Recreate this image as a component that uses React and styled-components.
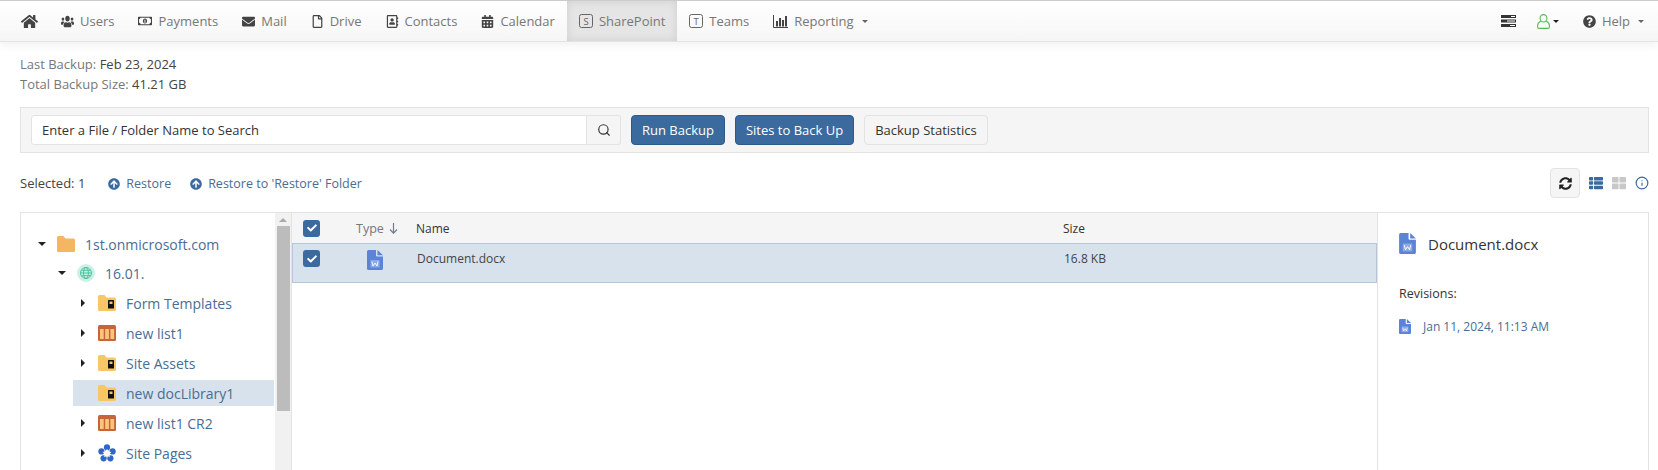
import React from "react";
import styled, { createGlobalStyle } from "styled-components";
import { FaHome, FaUsers, FaRegMoneyBillAlt, FaEnvelope, FaRegFile, FaCalendarAlt, FaQuestionCircle, FaArrowCircleUp, FaSyncAlt, FaThList, FaThLarge, FaCheck, FaRegAddressBook } from "react-icons/fa";
import { FiInfo, FiSearch } from "react-icons/fi";

const Global = createGlobalStyle`
  html, body { margin: 0; padding: 0; height: 470px; overflow: hidden; background: #fff; }
  body { font-family: "Open Sans", "Liberation Sans", sans-serif; font-size: 13px; color: #333; }
  * { box-sizing: border-box; }
`;
const Page = styled.div`height: 470px; display: flex; flex-direction: column; overflow: hidden;`;
const Nav = styled.nav`
  height: 42px; flex: none; display: flex; align-items: stretch; justify-content: space-between;
  padding-left: 9px; padding-right: 2px;
  border-top: 1px solid #ccc; border-bottom: 1px solid #e3e3e3;
  background: linear-gradient(#fff, #f6f6f6); box-shadow: 0 4px 8px rgba(0,0,0,.05);
`;
const NavGroup = styled.div`display: flex; align-items: stretch;`;
const NavItem = styled.div`
  display: flex; align-items: center; gap: ${p => p.$gap ?? 6}px; color: #777; font-size: 13px; white-space: nowrap;
  padding: 0 ${p => p.$right ?? 12}px 0 ${p => p.$left ?? 12}px;
  svg { color: #444; flex: none; }
  ${p => p.$active && `background: #e5e5e5; box-shadow: inset 0 0 8px rgba(0,0,0,.1);`}
`;
const LightIcon = styled.span`display: inline-flex; svg { color: #666; }`;
const Caret = styled.span`
  width: 0; height: 0; margin-left: 2px; border-left: 3px solid transparent; border-right: 3px solid transparent;
  border-top: 3px solid ${p => p.$dark ? "#222" : "#666"};
`;
const Content = styled.div`flex: 1; min-height: 0; display: flex; flex-direction: column; padding: 0 9px 0 20px;`;
const Info = styled.div`padding-top: 12px; line-height: 20px; color: #777; font-size: 13px; height: 65px; span { color: #444; }`;
const Toolbar = styled.div`
  height: 46px; flex: none; display: flex; align-items: center; gap: 10px; padding: 0 10px;
  background: #f5f5f5; border: 1px solid #e3e3e3;
`;
const SearchGroup = styled.div`display: flex; width: 590px; height: 30px;`;
const SearchInput = styled.div`
  flex: 1; display: flex; align-items: center; padding: 0 10px; background: #fff; color: #333; font-size: 13px;
  border: 1px solid #e3e3e3; border-radius: 3px 0 0 3px;
`;
const SearchBtn = styled.div`
  width: 34px; display: flex; align-items: center; justify-content: center; color: #333;
  background: #f5f5f5; border: 1px solid #e3e3e3; border-left: 0; border-radius: 0 3px 3px 0;
`;
const Btn = styled.div`
  height: 30px; display: flex; align-items: center; padding: 0 10px; font-size: 13px; border-radius: 4px;
  background: ${p => p.$primary ? "#3a6a9e" : "#f5f5f5"}; color: ${p => p.$primary ? "#fff" : "#333"};
  border: 1px solid ${p => p.$primary ? "#2e5a88" : "#e3e3e3"};
`;
const ActionBar = styled.div`height: 59px; flex: none; display: flex; align-items: center; padding-top: 1px;`;
const Selected = styled.div`color: #444; font-size: 13px; margin-right: 23px;`;
const RestoreLink = styled.div`
  display: flex; align-items: center; gap: 6px; color: #4a6d94; font-size: 12.5px; margin-right: 19px; padding-top: 1px;
`;
const ViewTools = styled.div`margin-left: auto; display: flex; align-items: center; gap: 9px; color: #3a6a9e;`;
const RefreshBtn = styled.div`
  width: 30px; height: 30px; display: flex; align-items: center; justify-content: center; color: #222;
  background: #f5f5f5; border: 1px solid #e3e3e3; border-radius: 4px;
`;
const Panels = styled.div`flex: 1; min-height: 0; display: flex; border-top: 1px solid #e3e3e3; border-left: 1px solid #e3e3e3; border-right: 1px solid #e3e3e3;`;
const TreePane = styled.div`width: 271px; flex: none; display: flex; border-right: 1px solid #e3e3e3;`;
const Tree = styled.div`flex: 1; padding-top: 18px;`;
const Row = styled.div`
  height: 26px; margin-bottom: ${p => p.$tight ? 3 : 4}px; margin-left: ${p => p.$indent}px; display: flex; align-items: center;
  color: #4a6d94; font-size: 14px; white-space: nowrap; padding-left: ${p => p.$pad}px;
  ${p => p.$active && `background: #d8e2ec;`}
`;
const Arrow = styled.span`
  width: 0; height: 0; flex: none;
  ${p => p.$open
    ? `border-left: 4px solid transparent; border-right: 4px solid transparent; border-top: 4px solid #222; margin-right: 11px;`
    : `border-top: 4px solid transparent; border-bottom: 4px solid transparent; border-left: 4px solid #222; margin-right: 13px;`}
`;
const RowIcon = styled.span`display: inline-flex; flex: none; margin-right: 10px;`;
const Scroll = styled.div`width: 16px; flex: none; background: #f1f1f1; display: flex; flex-direction: column; align-items: center; margin-left: 1px;`;
const ScrollUp = styled.div`
  margin-top: 5px; margin-bottom: 4px; width: 0; height: 0; border-left: 4px solid transparent; border-right: 4px solid transparent;
  border-bottom: 4px solid #aaa;
`;
const Thumb = styled.div`width: 13px; height: 185px; background: #bcbcbc;`;
const TablePane = styled.div`flex: 1; min-width: 0; border-right: 1px solid #e3e3e3;`;
const HeaderRow = styled.div`height: 30px; display: flex; align-items: center; background: #f5f5f5; color: #333; font-size: 12px;`;
const DataRow = styled.div`
  height: 40px; display: flex; align-items: flex-start; background: #d8e2ec; color: #444; font-size: 12px;
  border: 1px solid #b4c7d9; padding-top: 6px;
`;
const CheckCell = styled.div`width: 62px; flex: none; padding-left: ${p => p.$inRow ? 10 : 11}px;`;
const Check = styled.div`
  width: 17px; height: 17px; border-radius: 3px; background: #3a6a9e; color: #fff; display: flex; align-items: center; justify-content: center;
`;
const TypeCell = styled.div`width: 62px; flex: none; color: #777; font-size: 12.5px; display: flex; gap: 5px; align-items: center; padding-left: ${p => p.$center ? 12 : 2}px;`;
const NameCell = styled.div`width: 647px; flex: none; line-height: 17px;`;
const SizeCell = styled.div`line-height: 17px;`;
const DetailPane = styled.div`width: 270px; flex: none; padding: 20px 21px;`;
const DetailTitle = styled.div`display: flex; align-items: center; gap: 12px; font-size: 15px; color: #333;`;
const DetailLabel = styled.div`margin-top: 31px; font-size: 12.5px; color: #333;`;
const Revision = styled.div`margin-top: 16px; display: flex; align-items: center; gap: 12px; font-size: 12px; color: #4a6d94;`;

const Doc = ({ w = 16, h = 20 }) => (
  <svg width={w} height={h} viewBox="0 0 16 20">
    <path d="M1.5 0H9v5.500a1 1 0 0 0 1 1h6V18.500a1.500 1.500 0 0 1-1.500 1.500h-13A1.500 1.500 0 0 1 0 18.500v-17A1.500 1.500 0 0 1 1.500 0z" fill="#5b84d6" />
    <path d="M10.500 0L16 5.200h-5.500z" fill="#5b84d6" />
    <rect x="3.500" y="10" width="9" height="7.500" fill="#8eaae6" />
    <path d="M5 11.500l1 4.500 2-3 2 3 1-4.500" stroke="#fff" strokeWidth=".9" fill="none" />
  </svg>
);
const Folder = () => (
  <svg width="18" height="16" viewBox="0 0 18 16">
    <path d="M1.500 0h5l2 2.500h8A1.500 1.500 0 0 1 18 4v10.500a1.500 1.500 0 0 1-1.500 1.500h-15A1.500 1.500 0 0 1 0 14.500v-13A1.500 1.500 0 0 1 1.500 0z" fill="#f5b661" />
  </svg>
);
const LockFolder = () => (
  <svg width="18" height="16" viewBox="0 0 18 16">
    <path d="M1.500 0h5l2 2.500h8A1.500 1.500 0 0 1 18 4v10.500a1.500 1.500 0 0 1-1.500 1.500h-15A1.500 1.500 0 0 1 0 14.500v-13A1.500 1.500 0 0 1 1.500 0z" fill="#f8c765" />
    <rect x="10" y="5" width="6" height="8.500" rx=".5" fill="#111" />
    <rect x="11.500" y="6.500" width="3" height="2.500" fill="#e9c46a" />
  </svg>
);
const ListIcon = () => (
  <svg width="18" height="16" viewBox="0 0 18 16">
    <rect width="18" height="16" rx="1.500" fill="#c8643a" />
    <rect x="2" y="4" width="3.700" height="10" fill="#fbc57a" />
    <rect x="7.200" y="4" width="3.700" height="10" fill="#fbc57a" />
    <rect x="12.400" y="4" width="3.700" height="10" fill="#fbc57a" />
  </svg>
);
const Flower = () => (
  <svg width="18" height="18" viewBox="0 0 18 18">
    <g fill="#2f66c8">
      <circle cx="9" cy="3.400" r="3.100" />
      <circle cx="14.600" cy="7.400" r="3.100" />
      <circle cx="12.400" cy="14.300" r="3.100" />
      <circle cx="5.600" cy="14.300" r="3.100" />
      <circle cx="3.400" cy="7.400" r="3.100" />
    </g>
    <path d="M9 4.800l1.300 2.800 3.100.4-2.200 2.200.6 3-2.800-1.500-2.800 1.500.6-3-2.200-2.200 3.100-.4z" fill="#fff" />
  </svg>
);
const Globe = () => (
  <svg width="18" height="18" viewBox="0 0 18 18">
    <circle cx="9" cy="9" r="9" fill="#cdf0e4" />
    <g stroke="#4cc3a0" strokeWidth="1" fill="none">
      <circle cx="9" cy="9" r="5.500" />
      <ellipse cx="9" cy="9" rx="2.400" ry="5.500" />
      <path d="M3.500 9h11M4.300 6.300h9.400M4.300 11.700h9.400" />
    </g>
  </svg>
);
const LetterBox = ({ ch }) => (
  <svg width="14" height="14" viewBox="0 0 14 14">
    <rect x=".5" y=".5" width="13" height="13" rx="2" fill="none" stroke="#666" />
    <text x="7" y="10.500" fontSize="9.500" textAnchor="middle" fill="#666" fontFamily="Open Sans, sans-serif">{ch}</text>
  </svg>
);
const Bars = () => (
  <svg width="15" height="13" viewBox="0 0 15 13">
    <path d="M.5 0v12.500H15" stroke="#444" fill="none" />
    <g fill="#444"><rect x="3" y="6" width="2" height="5.500" /><rect x="6" y="3" width="2" height="8.500" /><rect x="9" y="5" width="2" height="6.500" /><rect x="12" y="1" width="2" height="10.500" /></g>
  </svg>
);
const Server = () => (
  <svg width="15" height="12" viewBox="0 0 15 12">
    <g fill="#333"><rect width="15" height="3" /><rect y="4.500" width="15" height="3" /><rect y="9" width="15" height="3" /></g>
    <g fill="#fff"><rect x="10" y="1" width="4" height="1" /><rect x="6" y="5.500" width="8" height="1" /><rect x="9" y="10" width="5" height="1" /></g>
  </svg>
);
const Person = () => (
  <svg width="13" height="15" viewBox="0 0 13 15" fill="none" stroke="#5cb85c" strokeWidth="1.100">
    <ellipse cx="6.500" cy="4.300" rx="3.400" ry="3.700" />
    <path d="M3.800 7.200C1.800 8 .6 9.500.6 11.500v1.500a1.400 1.400 0 0 0 1.400 1.400h9a1.400 1.400 0 0 0 1.400-1.400v-1.500c0-2-1.200-3.500-3.200-4.300" />
  </svg>
);
const DownArrow = () => (
  <svg width="9" height="11" viewBox="0 0 9 11" fill="none" stroke="#6b7f96" strokeWidth="1.200"><path d="M4.500 0v10M1 6.500l3.500 3.700L8 6.500" /></svg>
);

const items = [
  [<FaUsers width={14} height={13} preserveAspectRatio="none" />, "Users"],
  [<FaRegMoneyBillAlt size={14} />, "Payments"],
  [<FaEnvelope size={13} />, "Mail"],
  [<FaRegFile size={13} />, "Drive"],
  [<FaRegAddressBook size={13} />, "Contacts"],
  [<FaCalendarAlt size={13} />, "Calendar"],
];
const tree = [
  ["new list1", <ListIcon />],
  ["Site Assets", <LockFolder />],
  ["new docLibrary1", <LockFolder />, true],
  ["new list1 CR2", <ListIcon />],
  ["Site Pages", <Flower />],
];

export default function App() {
  return (
    <Page>
      <Global />
      <Nav>
        <NavGroup>
          <NavItem $right={11}><FaHome size={17} /></NavItem>
          {items.map(([icon, label]) => <NavItem key={label}>{icon}{label}</NavItem>)}
          <NavItem $active><LightIcon><LetterBox ch="S" /></LightIcon>SharePoint</NavItem>
          <NavItem><LightIcon><LetterBox ch="T" /></LightIcon>Teams</NavItem>
          <NavItem><Bars />Reporting<Caret /></NavItem>
        </NavGroup>
        <NavGroup>
          <NavItem><Server /></NavItem>
          <NavItem $gap={1} $left={9}><Person /><Caret $dark /></NavItem>
          <NavItem><FaQuestionCircle size={13} />Help<Caret /></NavItem>
        </NavGroup>
      </Nav>
      <Content>
        <Info>
          <div>Last Backup: <span>Feb 23, 2024</span></div>
          <div>Total Backup Size: <span>41.21 GB</span></div>
        </Info>
        <Toolbar>
          <SearchGroup>
            <SearchInput>Enter a File / Folder Name to Search</SearchInput>
            <SearchBtn><FiSearch size={14} /></SearchBtn>
          </SearchGroup>
          <Btn $primary>Run Backup</Btn>
          <Btn $primary>Sites to Back Up</Btn>
          <Btn>Backup Statistics</Btn>
        </Toolbar>
        <ActionBar>
          <Selected>Selected: 1</Selected>
          <RestoreLink><FaArrowCircleUp size={12} color="#3a6a9e" />Restore</RestoreLink>
          <RestoreLink><FaArrowCircleUp size={12} color="#3a6a9e" />Restore to 'Restore' Folder</RestoreLink>
          <ViewTools>
            <RefreshBtn><FaSyncAlt size={13} /></RefreshBtn>
            <FaThList size={14} />
            <FaThLarge size={14} color="#c8c8c8" />
            <FiInfo size={14} />
          </ViewTools>
        </ActionBar>
        <Panels>
          <TreePane>
            <Tree>
              <Row $indent={0} $pad={17} $tight><Arrow $open /><RowIcon><Folder /></RowIcon>1st.onmicrosoft.com</Row>
              <Row $indent={0} $pad={37}><Arrow $open /><RowIcon><Globe /></RowIcon>16.01.</Row>
              <Row $indent={0} $pad={60}><Arrow /><RowIcon><LockFolder /></RowIcon>Form Templates</Row>
              {tree.map(([label, icon, active]) => (
                <Row key={label} $indent={active ? 52 : 0} $pad={active ? 25 : 60} $active={active}>
                  {!active && <Arrow />}<RowIcon>{icon}</RowIcon>{label}
                </Row>
              ))}
            </Tree>
            <Scroll><ScrollUp /><Thumb /></Scroll>
          </TreePane>
          <TablePane>
            <HeaderRow>
              <CheckCell><Check><FaCheck size={10} /></Check></CheckCell>
              <TypeCell>Type <DownArrow /></TypeCell>
              <NameCell>Name</NameCell>
              <SizeCell>Size</SizeCell>
            </HeaderRow>
            <DataRow>
              <CheckCell $inRow><Check><FaCheck size={10} /></Check></CheckCell>
              <TypeCell $center><Doc /></TypeCell>
              <NameCell>Document.docx</NameCell>
              <SizeCell>16.8 KB</SizeCell>
            </DataRow>
          </TablePane>
          <DetailPane>
            <DetailTitle><Doc w={17} h={21} />Document.docx</DetailTitle>
            <DetailLabel>Revisions:</DetailLabel>
            <Revision><Doc w={12} h={15} />Jan 11, 2024, 11:13 AM</Revision>
          </DetailPane>
        </Panels>
      </Content>
    </Page>
  );
}
